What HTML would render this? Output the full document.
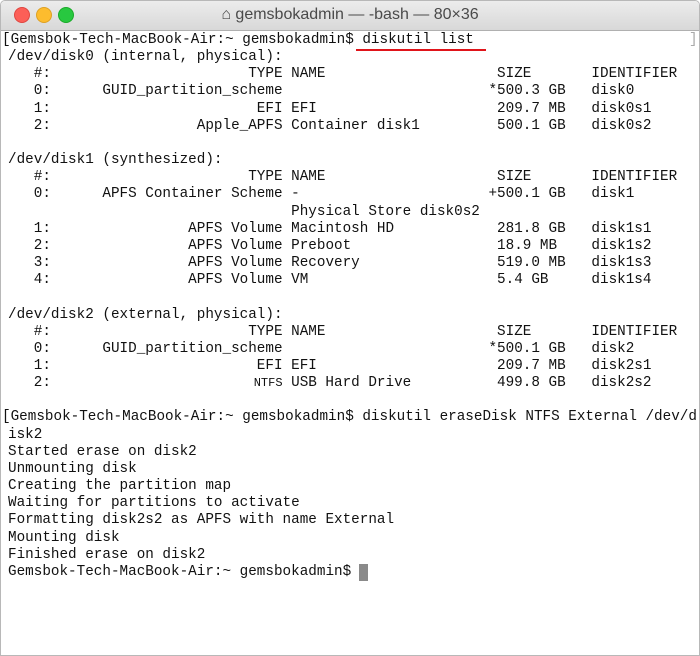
<!DOCTYPE html>
<html><head><style>
html,body{margin:0;padding:0;background:#fff;}
body{width:700px;height:656px;position:relative;overflow:hidden;}
.win{position:absolute;left:0;top:0;width:698px;height:654px;border:1px solid #b8b8b8;border-radius:5px 5px 0 0;background:#fff;overflow:hidden;}
.tb{position:absolute;left:0;top:0;width:698px;height:29px;background:linear-gradient(#ececec,#d8d8d8);border-bottom:1px solid #b0b0b0;}
.dot{position:absolute;top:6px;width:14px;height:14px;border-radius:50%;}
.title{position:absolute;left:0;width:698px;top:5px;text-align:center;font:16px "Liberation Sans",sans-serif;color:#4a4a4a;}
pre{position:absolute;left:7px;top:31px;margin:0;font:14.3px/17.16px "Liberation Mono",monospace;color:#111;}
.ul{position:absolute;left:355px;top:48px;width:130px;height:2px;background:#e0141a;}
.cur{position:absolute;left:358px;top:563px;width:9px;height:17px;background:#8a8a8a;}
.rb{position:absolute;left:688px;top:31px;font:14.3px/17.16px "Liberation Mono",monospace;color:#aaa;}
.nt{display:inline-block;width:34.3px;text-align:right;font-size:12px;}
</style></head><body>
<div class="win">
<div class="tb">
<div class="dot" style="left:13px;background:#fc5f57;border:0.5px solid #df4640"></div>
<div class="dot" style="left:35px;background:#fdbc2e;border:0.5px solid #dea123"></div>
<div class="dot" style="left:57px;background:#28c840;border:0.5px solid #1aab29"></div>
<div class="title">⌂ gemsbokadmin — -bash — 80×36</div>
</div>
<pre><span style="margin-left:-6px">[</span>Gemsbok-Tech-MacBook-Air:~ gemsbokadmin$ diskutil list
/dev/disk0 (internal, physical):
   #:                       TYPE NAME                    SIZE       IDENTIFIER
   0:      GUID_partition_scheme                        *500.3 GB   disk0
   1:                        EFI EFI                     209.7 MB   disk0s1
   2:                 Apple_APFS Container disk1         500.1 GB   disk0s2

/dev/disk1 (synthesized):
   #:                       TYPE NAME                    SIZE       IDENTIFIER
   0:      APFS Container Scheme -                      +500.1 GB   disk1
                                 Physical Store disk0s2
   1:                APFS Volume Macintosh HD            281.8 GB   disk1s1
   2:                APFS Volume Preboot                 18.9 MB    disk1s2
   3:                APFS Volume Recovery                519.0 MB   disk1s3
   4:                APFS Volume VM                      5.4 GB     disk1s4

/dev/disk2 (external, physical):
   #:                       TYPE NAME                    SIZE       IDENTIFIER
   0:      GUID_partition_scheme                        *500.1 GB   disk2
   1:                        EFI EFI                     209.7 MB   disk2s1
   2:                       <span class="nt">NTFS</span> USB Hard Drive          499.8 GB   disk2s2

<span style="margin-left:-6px">[</span>Gemsbok-Tech-MacBook-Air:~ gemsbokadmin$ diskutil eraseDisk NTFS External /dev/d
isk2
Started erase on disk2
Unmounting disk
Creating the partition map
Waiting for partitions to activate
Formatting disk2s2 as APFS with name External
Mounting disk
Finished erase on disk2
Gemsbok-Tech-MacBook-Air:~ gemsbokadmin$ </pre>
<div class="rb">]</div>
<div class="ul"></div>
<div class="cur"></div>
</div>
</body></html>
